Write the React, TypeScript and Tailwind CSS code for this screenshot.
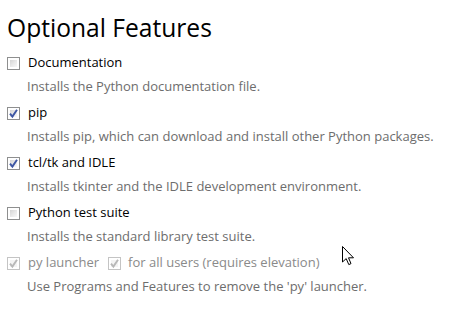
import React from 'react';

type Opt = {
  label: string;
  desc: string;
  checked: boolean;
};

const options: Opt[] = [
  { label: 'Documentation', desc: 'Installs the Python documentation file.', checked: false },
  { label: 'pip', desc: 'Installs pip, which can download and install other Python packages.', checked: true },
  { label: 'tcl/tk and IDLE', desc: 'Installs tkinter and the IDLE development environment.', checked: true },
  { label: 'Python test suite', desc: 'Installs the standard library test suite.', checked: false },
];

function Box({ checked, disabled }: { checked: boolean; disabled?: boolean }) {
  return (
    <div
      className={
        'w-[13px] h-[13px] shrink-0 border p-[2px] ' +
        (disabled ? 'border-[#c4c4c4] bg-white' : 'border-[#8e8f8f] bg-white')
      }
    >
      <div
        className={
          'w-full h-full relative ' +
          (disabled
            ? 'bg-[#f4f4f4]'
            : 'bg-gradient-to-br from-[#d4d4d4] via-[#e8e8e8] to-[#f8f8f8]')
        }
      >
        {checked && (
          <svg width="11" height="11" viewBox="0 0 11 11" className="absolute -left-[2px] -top-[2px]">
            <path
              d="M2 5.6 L4.4 8.6 L9 1.8"
              fill="none"
              stroke={disabled ? '#b8b8b8' : '#3d56a3'}
              strokeWidth="1.9"
            />
          </svg>
        )}
      </div>
    </div>
  );
}

export default function App() {
  return (
    <div
      className="relative w-[451px] h-[331px] bg-white overflow-hidden"
      style={{ fontFamily: '"Open Sans", "Noto Sans", sans-serif' }}
    >
      <div className="h-[51px] pl-[7px] pt-[12px]">
        <h1 className="text-[24.6px] leading-[32px] text-black">Optional Features</h1>
      </div>

      <div className="flex flex-col gap-[2px]">
        {options.map((o) => (
          <div key={o.label}>
            <div className="h-[24px] flex items-center gap-[8px] pl-[7px]">
              <Box checked={o.checked} />
              <span className="text-[13px] text-black">{o.label}</span>
            </div>
            <div className="h-[24px] flex items-center pl-[27px] text-[13px] text-[#6d6d6d]">
              {o.desc}
            </div>
          </div>
        ))}

        <div>
          <div className="h-[24px] flex items-center pl-[7px] text-[13px] text-[#8a8a8a]">
            <Box checked disabled />
            <span className="ml-[8px]">py launcher</span>
            <div className="ml-[9px] flex items-center gap-[7px]">
              <Box checked disabled />
              <span>for all users (requires elevation)</span>
            </div>
          </div>
          <div className="h-[24px] flex items-center pl-[27px] text-[13px] text-[#6d6d6d]">
            Use Programs and Features to remove the 'py' launcher.
          </div>
        </div>
      </div>

      <svg width="14" height="22" viewBox="0 0 14 22" className="absolute left-[342px] top-[246px]">
        <path
          d="M0.5 0.5 L0.5 16 L4.2 12.6 L6.8 18.6 L9 17.6 L6.5 11.8 L11.5 11.8 Z"
          fill="white"
          stroke="black"
          strokeWidth="1"
        />
      </svg>
    </div>
  );
}
